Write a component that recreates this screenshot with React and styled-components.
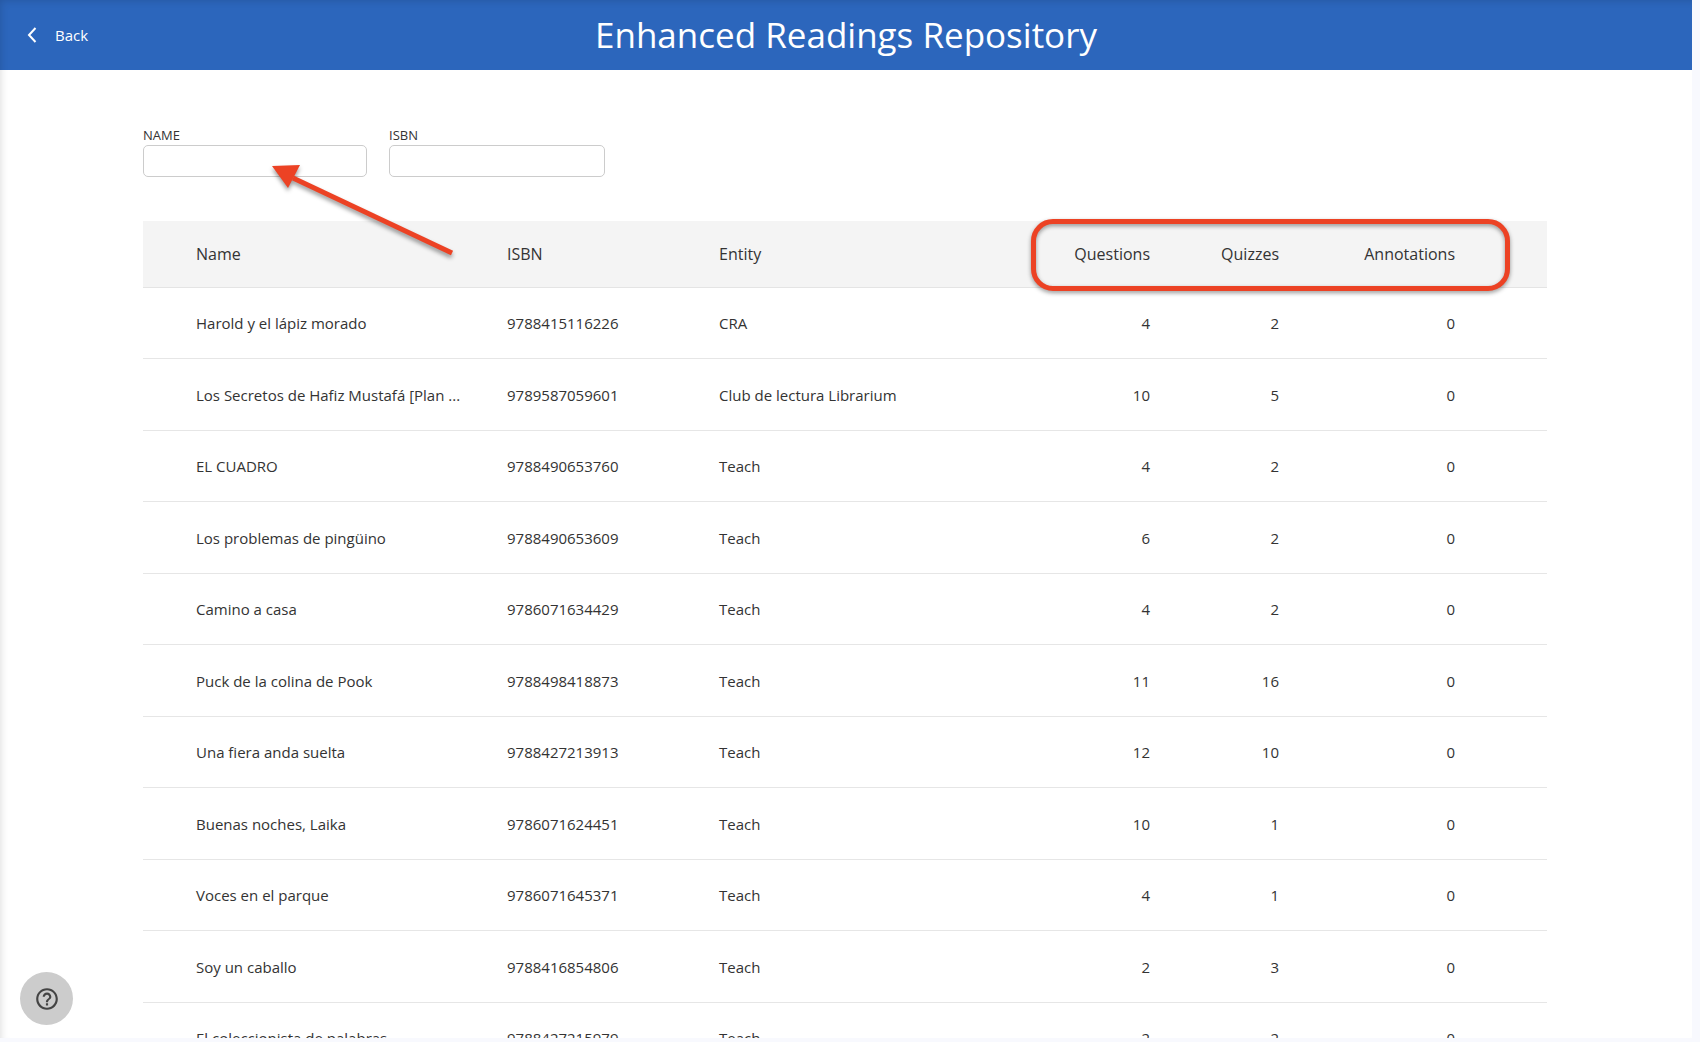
import styled, { createGlobalStyle } from "styled-components";
import { MdHelpOutline } from "react-icons/md";

const books = [
  { name: "Harold y el lápiz morado", isbn: "9788415116226", entity: "CRA", questions: 4, quizzes: 2, annotations: 0 },
  { name: "Los Secretos de Hafiz Mustafá [Plan ...", isbn: "9789587059601", entity: "Club de lectura Librarium", questions: 10, quizzes: 5, annotations: 0 },
  { name: "EL CUADRO", isbn: "9788490653760", entity: "Teach", questions: 4, quizzes: 2, annotations: 0 },
  { name: "Los problemas de pingüino", isbn: "9788490653609", entity: "Teach", questions: 6, quizzes: 2, annotations: 0 },
  { name: "Camino a casa", isbn: "9786071634429", entity: "Teach", questions: 4, quizzes: 2, annotations: 0 },
  { name: "Puck de la colina de Pook", isbn: "9788498418873", entity: "Teach", questions: 11, quizzes: 16, annotations: 0 },
  { name: "Una fiera anda suelta", isbn: "9788427213913", entity: "Teach", questions: 12, quizzes: 10, annotations: 0 },
  { name: "Buenas noches, Laika", isbn: "9786071624451", entity: "Teach", questions: 10, quizzes: 1, annotations: 0 },
  { name: "Voces en el parque", isbn: "9786071645371", entity: "Teach", questions: 4, quizzes: 1, annotations: 0 },
  { name: "Soy un caballo", isbn: "9788416854806", entity: "Teach", questions: 2, quizzes: 3, annotations: 0 },
  { name: "El coleccionista de palabras", isbn: "9788427215979", entity: "Teach", questions: 2, quizzes: 2, annotations: 0 },
];

const App = () => {
  return (
    <Page>
      <GlobalStyle />
      <Panel>
        <Header>
          <BackButton type="button">
            <svg width="10" height="16" viewBox="0 0 10 16" fill="none" stroke="#fff" strokeWidth="2">
              <path d="M8.5 1 L2 8 L8.5 15" />
            </svg>
            <span>Back</span>
          </BackButton>
          <Title>Enhanced Readings Repository</Title>
        </Header>

        <Content>
          <Filters>
            <Field $width="224px">
              <label htmlFor="filter-name">NAME</label>
              <input id="filter-name" type="text" />
            </Field>
            <Field $width="216px">
              <label htmlFor="filter-isbn">ISBN</label>
              <input id="filter-isbn" type="text" />
            </Field>
            <Arrow width="190" height="104" viewBox="0 0 190 104">
              <path d="M21 12 L180 87" stroke="#ec4224" strokeWidth="5" />
              <path d="M0 0 L28 -1 L16 22 Z" fill="#ec4224" />
            </Arrow>
          </Filters>

          <TableWrap>
            <Table>
              <colgroup>
                <Col $width="37px" />
                <Col />
                <Col $width="212px" />
                <Col />
                <Col $width="152px" />
                <Col $width="129px" />
                <Col $width="176px" />
                <Col $width="76px" />
              </colgroup>
              <thead>
                <tr>
                  <HeadCell />
                  <HeadCell>Name</HeadCell>
                  <HeadCell>ISBN</HeadCell>
                  <HeadCell>Entity</HeadCell>
                  <HeadCell $align="right">Questions</HeadCell>
                  <HeadCell $align="right">Quizzes</HeadCell>
                  <HeadCell $align="right">Annotations</HeadCell>
                  <HeadCell />
                </tr>
              </thead>
              <tbody>
                {books.map((book) => (
                  <Row key={book.isbn}>
                    <Cell />
                    <Cell>{book.name}</Cell>
                    <Cell>{book.isbn}</Cell>
                    <Cell>{book.entity}</Cell>
                    <Cell $align="right">{book.questions}</Cell>
                    <Cell $align="right">{book.quizzes}</Cell>
                    <Cell $align="right">{book.annotations}</Cell>
                    <Cell />
                  </Row>
                ))}
              </tbody>
            </Table>
            <Highlight />
          </TableWrap>
        </Content>
      </Panel>
      <HelpButton type="button" aria-label="Help">
        <MdHelpOutline size={26} />
      </HelpButton>
    </Page>
  );
};

export default App;

const GlobalStyle = createGlobalStyle`
  * {
    box-sizing: border-box;
  }
  body {
    margin: 0;
    background: #f8f9fe;
    color: #333;
    font-family: "Open Sans", sans-serif;
    font-size: 15px;
  }
`;

const Page = styled.div`
  position: relative;
  height: 100vh;
  padding: 0 8px 4px 0;
  &::after {
    content: "";
    position: absolute;
    inset: 0 8px 4px 0;
    box-shadow: inset 4px 4px 8px -4px rgba(0, 0, 0, 0.16);
    pointer-events: none;
  }
`;

const Panel = styled.div`
  height: 100%;
  background: #fff;
  overflow-y: auto;
  scrollbar-width: none;
`;

const Header = styled.header`
  height: 70px;
  padding: 0 27px;
  background: #2c66bc;
  color: #fff;
  display: grid;
  grid-template-columns: 1fr auto 1fr;
  align-items: center;
`;

const BackButton = styled.button`
  justify-self: start;
  display: flex;
  align-items: center;
  gap: 18px;
  padding: 0;
  border: 0;
  background: none;
  color: inherit;
  font: inherit;
  font-weight: 500;
  cursor: pointer;
`;

const Title = styled.h1`
  margin: 0;
  font-size: 35px;
  font-weight: 400;
  line-height: 70px;
`;

const Content = styled.main`
  padding: 56px 145px 0 143px;
`;

const Filters = styled.div`
  position: relative;
  display: flex;
  gap: 22px;
  margin-bottom: 44px;
`;

const Field = styled.div`
  width: ${(props) => props.$width};
  label {
    display: block;
    font-size: 13px;
    line-height: 19px;
  }
  input {
    display: block;
    width: 100%;
    height: 32px;
    padding: 0 8px;
    border: 1px solid #ccc;
    border-radius: 5px;
    background: #fff;
    font: inherit;
  }
`;

const Arrow = styled.svg`
  position: absolute;
  left: 129px;
  top: 40px;
  z-index: 1;
  overflow: visible;
  pointer-events: none;
  filter: drop-shadow(0 3px 2px rgba(0, 0, 0, 0.4));
`;

const TableWrap = styled.div`
  position: relative;
`;

const Table = styled.table`
  width: 100%;
  table-layout: fixed;
  border-collapse: separate;
  border-spacing: 0;
`;

const Col = styled.col`
  width: ${(props) => props.$width || "auto"};
`;

const HeadCell = styled.th`
  height: 67px;
  padding: 0 16px;
  background: #f4f4f4;
  border-bottom: 1px solid #e4e4e4;
  font-size: 16px;
  font-weight: 500;
  text-align: ${(props) => props.$align || "left"};
`;

const Cell = styled.td`
  height: 71px;
  padding: 0 16px;
  border-bottom: 1px solid #e6e6e6;
  text-align: ${(props) => props.$align || "left"};
  white-space: nowrap;
  overflow: hidden;
  text-overflow: ellipsis;
`;

const Row = styled.tr`
  &:nth-child(even) ${Cell} {
    height: 72px;
  }
`;

const Highlight = styled.div`
  position: absolute;
  top: -2px;
  right: 37px;
  width: 479px;
  height: 72px;
  border: 5px solid #ec4224;
  border-radius: 22px;
  pointer-events: none;
  filter: drop-shadow(0 2px 2px rgba(0, 0, 0, 0.4));
`;

const HelpButton = styled.button`
  position: absolute;
  left: 20px;
  bottom: 17px;
  width: 53px;
  height: 53px;
  padding: 0;
  border: 0;
  border-radius: 50%;
  background: #ccc;
  color: #444;
  display: grid;
  place-items: center;
  cursor: pointer;
`;
